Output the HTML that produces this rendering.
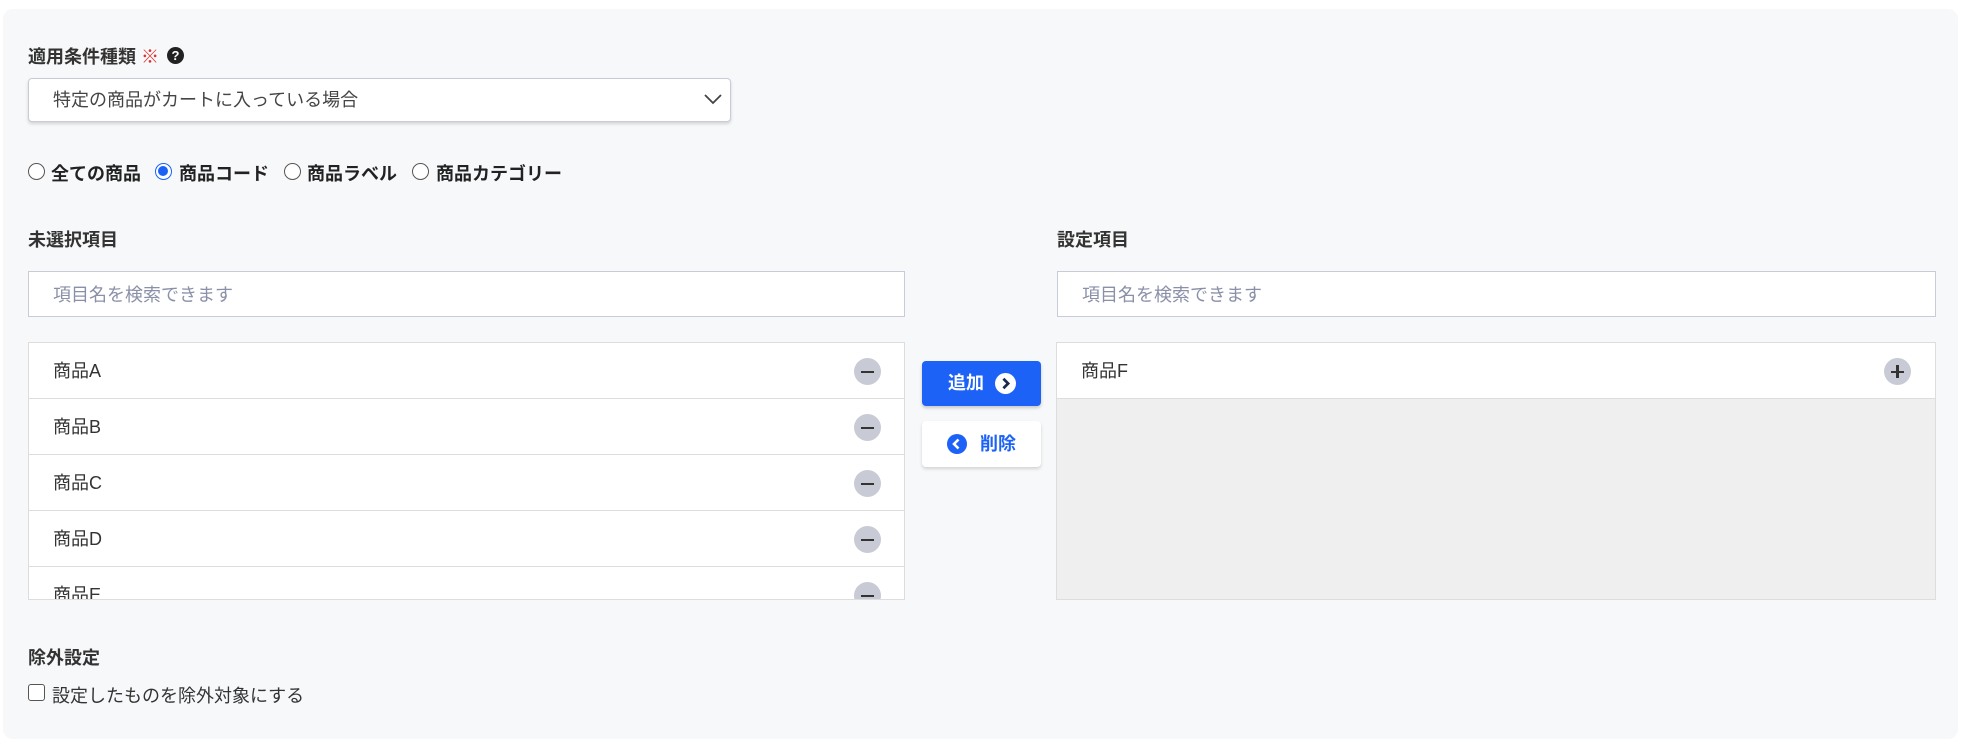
<!DOCTYPE html>
<html><head><meta charset="utf-8"><style>
*{box-sizing:border-box;margin:0;padding:0}
body{width:1966px;height:752px;background:#fff;font-family:"Liberation Sans","Noto Sans CJK JP",sans-serif;color:#333;position:relative;overflow:hidden}
.panel{position:absolute;left:3px;top:9px;width:1955px;height:730px;background:#f7f8fa;border-radius:10px}
.a{position:absolute}
.lbl{font-weight:bold;font-size:18px;color:#333}
.box{background:#fff;border:1px solid #c9ccd8}
.row{position:absolute;left:0;right:0;height:56px;border-bottom:1px solid #ddd;font-size:18px;padding-left:24px;line-height:56px;color:#333}
.mi{position:absolute;right:23px;top:15px;width:27px;height:27px;border-radius:50%;background:#c8cbd6}
.mi:after{content:"";position:absolute;left:7px;top:12.5px;width:13px;height:2.5px;background:#333}
.radio{position:absolute;top:163px;width:17px;height:17px;border:1.5px solid #555;border-radius:50%;background:#fff}
.rt{position:absolute;top:160px;font-size:18px;font-weight:bold;color:#222}
</style></head><body>
<div class="panel"></div>
<div class="a lbl" style="left:28px;top:43px">適用条件種類 <span style="color:#d33;font-weight:normal">※</span></div>
<div class="a" style="left:167px;top:47px;width:17px;height:17px;border-radius:50%;background:#222;color:#fff;font-size:13px;font-weight:bold;text-align:center;line-height:17px">?</div>
<div class="a" style="left:28px;top:78px;width:703px;height:44px;background:#fff;border:1px solid #c9ccd8;border-radius:4px;box-shadow:0 2px 3px rgba(0,0,0,.15);font-size:18px;line-height:42px;padding-left:24px;color:#444">特定の商品がカートに入っている場合
<svg style="position:absolute;right:8px;top:14px" width="18" height="12" viewBox="0 0 18 12"><path d="M1 2l8 8 8-8" stroke="#444" stroke-width="1.8" fill="none"/></svg></div>

<div class="radio" style="left:28px"></div><div class="rt" style="left:51px">全ての商品</div>
<div class="radio" style="left:155px;border-color:#1a62f5"><div style="position:absolute;left:2px;top:2px;width:10px;height:10px;border-radius:50%;background:#1a62f5"></div></div><div class="rt" style="left:179px">商品コード</div>
<div class="radio" style="left:284px"></div><div class="rt" style="left:307px">商品ラベル</div>
<div class="radio" style="left:412px"></div><div class="rt" style="left:436px">商品カテゴリー</div>

<div class="a lbl" style="left:28px;top:226px">未選択項目</div>
<div class="a lbl" style="left:1057px;top:226px">設定項目</div>

<div class="a box" style="left:28px;top:271px;width:877px;height:46px;font-size:18px;line-height:46px;padding-left:24px;color:#8a90a8">項目名を検索できます</div>
<div class="a box" style="left:1057px;top:271px;width:879px;height:46px;font-size:18px;line-height:46px;padding-left:24px;color:#8a90a8">項目名を検索できます</div>

<div class="a" style="left:28px;top:342px;width:877px;height:258px;background:#fff;border:1px solid #ddd;overflow:hidden">
<div class="row" style="top:0">商品A<div class="mi"></div></div>
<div class="row" style="top:56px">商品B<div class="mi"></div></div>
<div class="row" style="top:112px">商品C<div class="mi"></div></div>
<div class="row" style="top:168px">商品D<div class="mi"></div></div>
<div class="row" style="top:224px">商品E<div class="mi"></div></div>
</div>

<div class="a" style="left:922px;top:361px;width:119px;height:45px;background:#1c62f7;border-radius:4px;box-shadow:0 2px 3px rgba(0,0,0,.2);color:#fff;font-weight:bold;font-size:18px;line-height:45px;padding-left:26px">追加
<svg style="position:absolute;left:73px;top:12px" width="21" height="21" viewBox="0 0 20 20"><circle cx="10" cy="10" r="10" fill="#fff"/><path d="M8 5.5l4.5 4.5-4.5 4.5" stroke="#1c2a4a" stroke-width="2.6" fill="none"/></svg></div>
<div class="a" style="left:922px;top:421px;width:119px;height:46px;background:#fff;border-radius:4px;box-shadow:0 2px 3px rgba(0,0,0,.15);color:#1c62f7;font-weight:bold;font-size:18px;line-height:46px;padding-left:58px">削除
<svg style="position:absolute;left:25px;top:13px" width="20" height="20" viewBox="0 0 20 20"><circle cx="10" cy="10" r="10" fill="#1c62f7"/><path d="M11.5 5.5L7 10l4.5 4.5" stroke="#fff" stroke-width="2.6" fill="none"/></svg></div>

<div class="a" style="left:1056px;top:342px;width:880px;height:258px;background:#efefef;border:1px solid #ddd">
<div class="row" style="top:0;background:#fff">商品F<div class="mi" style="right:24px"></div><div style="position:absolute;right:36.5px;top:22px;width:2.5px;height:13px;background:#333"></div></div>
</div>

<div class="a lbl" style="left:28px;top:644px">除外設定</div>
<div class="a" style="left:28px;top:684px;width:17px;height:17px;border:1.5px solid #555;border-radius:3px;background:#fff"></div>
<div class="a" style="left:52px;top:682px;font-size:18px;color:#333">設定したものを除外対象にする</div>
</body></html>
